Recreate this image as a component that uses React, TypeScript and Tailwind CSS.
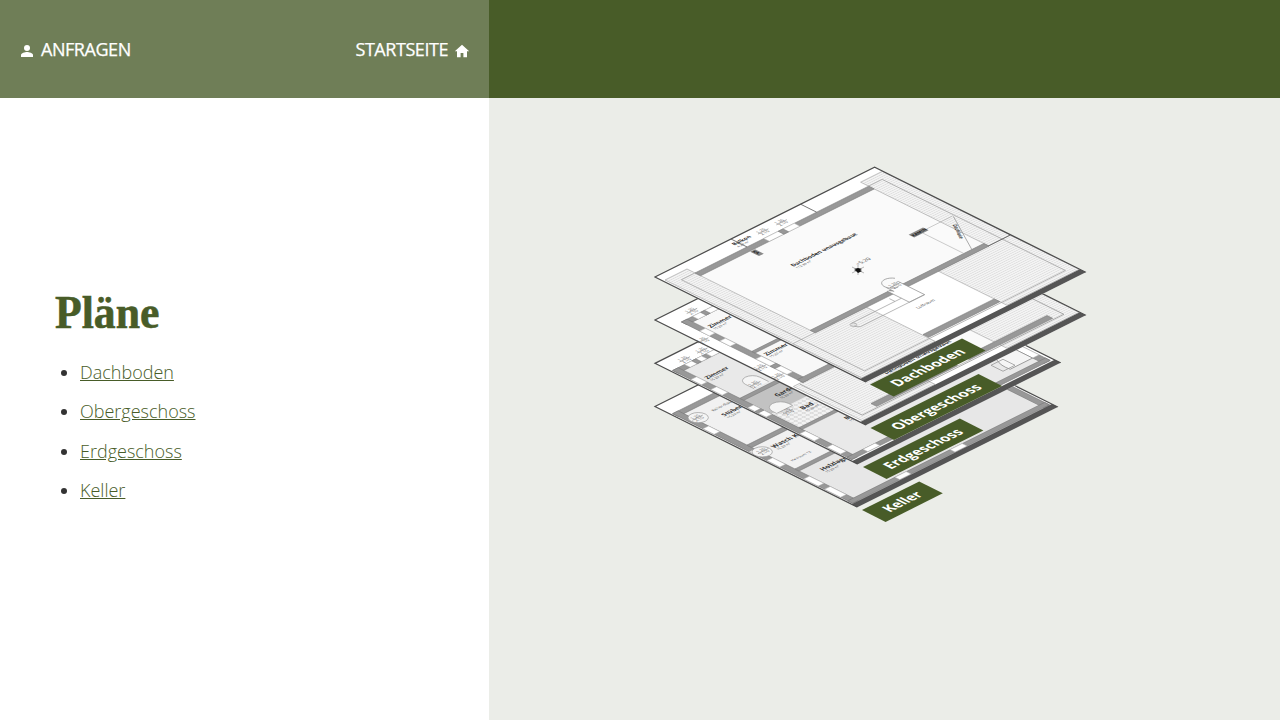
import type { ReactNode } from "react";

type Rect = [number, number, number, number];

const WALL = "#989898";
const EDGE = "#4c4c4c";

function Box({ r, fill }: { r: Rect; fill: string }) {
  return <rect x={r[0]} y={r[1]} width={r[2] - r[0]} height={r[3] - r[1]} fill={fill} />;
}

function Wall({ r }: { r: Rect }) {
  return <rect x={r[0]} y={r[1]} width={r[2] - r[0]} height={r[3] - r[1]} fill={WALL} stroke="#777" strokeWidth={0.6} />;
}

function Opening({ r }: { r: Rect }) {
  return <rect x={r[0]} y={r[1]} width={r[2] - r[0]} height={r[3] - r[1]} fill="#fff" stroke="#bbb" strokeWidth={0.5} />;
}

function Hatch({ r }: { r: Rect }) {
  return (
    <g>
      <rect x={r[0]} y={r[1]} width={r[2] - r[0]} height={r[3] - r[1]} fill="#f4f4f4" />
      <rect x={r[0]} y={r[1]} width={r[2] - r[0]} height={r[3] - r[1]} fill="url(#hatch)" stroke="#aaa" strokeWidth={0.7} />
    </g>
  );
}

function Room({ x, y, name, size = 7, note = "15.20 m²" }: { x: number; y: number; name: string; size?: number; note?: string }) {
  return (
    <g fill="#333">
      <text x={x} y={y} fontSize={size} fontWeight={700}>{name}</text>
      <text x={x} y={y + 5} fontSize={4} fill="#444">{note}</text>
    </g>
  );
}

function Dim({ x, y }: { x: number; y: number }) {
  return (
    <g fill="#666" fontSize={5}>
      <text x={x} y={y}>1.20</text>
      <text x={x} y={y + 5}>2.10</text>
      <path d={`M${x - 1} ${y + 0.7}h13`} stroke="#777" strokeWidth={0.6} />
    </g>
  );
}

function Floor({ x, y, w, h, children }: { x: number; y: number; w: number; h: number; children: ReactNode }) {
  return (
    <g transform={`matrix(.8 -.4 .8 .398 ${x} ${y})`}>
      <rect width={w} height={h} fill="#fff" />
      {children}
      <rect y={h - 7.5} width={w} height={7.5} fill="#555" />
      <path d={`M0 ${h}V0H${w}V${h}`} fill="none" stroke={EDGE} strokeWidth={1.7} />
    </g>
  );
}

function Label({ x, y, w, children }: { x: number; y: number; w: number; children: string }) {
  return (
    <g transform={`matrix(.8 -.4 .8 .405 ${x} ${y})`}>
      <rect width={w} height={29.5} fill="#485c28" />
      <text x={w / 2} y={20.3} textAnchor="middle" textLength={w - 29} lengthAdjust="spacingAndGlyphs" fontSize={16} fontWeight={700} fill="#fff">{children}</text>
    </g>
  );
}

function Plans() {
  return (
    <svg
      width="460"
      height="390"
      viewBox="640 150 460 390"
      className="ml-[151px] mt-[52px] block font-['Open_Sans',sans-serif]"
      role="img"
      aria-label="Pläne"
    >
      <defs>
        <pattern id="hatch" width="3" height="3" patternUnits="userSpaceOnUse">
          <path d="M0 1.5H3" stroke="#d8d8d8" strokeWidth=".8" />
        </pattern>
        <pattern id="tiles" width="5" height="5" patternUnits="userSpaceOnUse">
          <path d="M0 .5H5M.5 0V5" stroke="#c6c6c6" strokeWidth=".6" />
        </pattern>
      </defs>

      <Floor x={655} y={406.5} w={250.5} h={253}>
        <Box r={[2, 20, 248, 245]} fill="#e7e7e7" />
        <Box r={[9, 27, 90, 169]} fill="#f1f1f1" />
        <Wall r={[2, 20, 248, 27]} />
        <Wall r={[2, 20, 9, 245]} />
        <Wall r={[241, 20, 248, 245]} />
        <Wall r={[2, 239, 248, 245]} />
        <Wall r={[9, 106, 80, 112]} />
        <Wall r={[9, 166, 80, 171]} />
        <Opening r={[2, 58, 9, 72]} />
        <Opening r={[2, 116, 9, 128]} />
        <Opening r={[2, 138, 9, 154]} />
        <Opening r={[2, 184, 9, 202]} />
        <Opening r={[2, 210, 9, 230]} />
        <Opening r={[61, 239, 75, 245]} />
        <Opening r={[130, 239, 145, 245]} />
        <circle cx="13" cy="41" r="9" fill="#f5f5f5" stroke="#999" strokeWidth=".7" />
        <circle cx="10" cy="124" r="9" fill="#f5f5f5" stroke="#999" strokeWidth=".7" />
        <Dim x={7} y={40} />
        <Dim x={6} y={123} />
        <text x={30} y={43} fontSize={5} fill="#555">Keller-Raum</text>
        <Room x={31} y={56} name="Stüberl" />
        <Room x={22} y={127} name="Wasch Küche" size={7.5} />
        <Room x={24} y={186} name="Holzlager" size={7.5} />
        <text x={17} y={155} fontSize={4} fill="#444">Heizraum 12</text>
      </Floor>

      <Floor x={655} y={363.3} w={253.5} h={253.5}>
        <Box r={[2, 20, 250, 244]} fill="#e9e9e9" />
        <Box r={[9, 102, 70, 136]} fill="#c2c2c2" />
        <Box r={[9, 138, 70, 171]} fill="#f3f3f3" />
        <Box r={[9, 138, 70, 171]} fill="url(#tiles)" />
        <Wall r={[2, 20, 250, 27]} />
        <Wall r={[2, 20, 9, 244]} />
        <Wall r={[242, 20, 250, 244]} />
        <Wall r={[2, 238, 250, 244]} />
        <Wall r={[9, 97, 80, 102]} />
        <Wall r={[9, 171, 90, 175]} />
        <Opening r={[17, 20, 38, 27]} />
        <Wall r={[26, 20, 31, 27]} />
        <Opening r={[44, 20, 57, 27]} />
        <Opening r={[2, 43, 9, 56]} />
        <Opening r={[2, 68, 9, 82]} />
        <Opening r={[2, 114, 9, 137]} />
        <Wall r={[2, 123, 9, 127]} />
        <Opening r={[2, 179, 9, 197]} />
        <Opening r={[2, 213, 9, 230]} />
        <Opening r={[22, 238, 37, 244]} />
        <Opening r={[160, 238, 176, 244]} />
        <Opening r={[242, 198, 250, 230]} />
        <path d="M242 197H232A30 30 0 0 0 214 230H242z" fill="#f5f5f5" stroke="#888" strokeWidth=".8" />
        <path d="M207 213h15v15h-15z" fill="none" stroke="#999" strokeWidth=".8" />
        <path d="M30 94V83a9 9 0 0 1 18 0v11M13 139V134a9 9 0 0 1 20 0v5z" fill="#f5f5f5" stroke="#999" strokeWidth=".7" />
        <Dim x={31} y={88} />
        <Dim x={17} y={143} />
        <Dim x={18} y={13} />
        <Dim x={40} y={13} />
        <Room x={13} y={53} name="Zimmer" />
        <Room x={34} y={119} name="Garderobe" size={7.5} />
        <Room x={34} y={151} name="Bad" size={7.5} />
        <Room x={49} y={191} name="Büro" />
      </Floor>

      <Floor x={655} y={320} w={274.5} h={264}>
        <Box r={[21, 26, 250, 163]} fill="#f8f8f8" />
        <Box r={[94, 171, 184, 240]} fill="#fafafa" />
        <Hatch r={[3, 170, 94, 256]} />
        <Hatch r={[184, 170, 274, 256]} />
        <Wall r={[14, 19, 260, 26]} />
        <Wall r={[14, 19, 21, 171]} />
        <Wall r={[14, 164, 120, 171]} />
        <Wall r={[21, 100, 80, 104]} />
        <Wall r={[30, 240, 250, 247]} />
        <Opening r={[28, 19, 58, 26]} />
        <Wall r={[38, 19, 43, 26]} />
        <Opening r={[14, 42, 21, 54]} />
        <Opening r={[14, 67, 21, 80]} />
        <Opening r={[14, 112, 21, 151]} />
        <Wall r={[14, 130, 21, 136]} />
        <Opening r={[132, 240, 146, 247]} />
        <path d="M10 171V249H262V171M65 98V88q7-8 14 0v10" fill="none" stroke="#888" strokeWidth=".7" />
        <Dim x={29} y={11} />
        <Dim x={-1} y={55} />
        <Dim x={1} y={125} />
        <Dim x={1} y={147} />
        <Room x={25} y={45} name="Zimmer" />
        <Room x={25} y={115} name="Zimmer" />
        <Room x={76} y={213} name="Dachboden unausgebaut" size={6.6} />
      </Floor>

      <Floor x={655} y={277} w={274.5} h={264}>
        <Box r={[30, 27, 247, 163]} fill="#fafafa" />
        <Hatch r={[2.5, 10, 30, 256]} />
        <Hatch r={[247, 10, 274, 172]} />
        <Hatch r={[2.5, 170, 94, 256]} />
        <Hatch r={[184, 170, 274, 256]} />
        <Wall r={[30, 20, 247, 27]} />
        <Wall r={[30, 164, 247, 170.5]} />
        <Wall r={[95, 240, 184, 247]} />
        <path d="M30 20H13V249H264V20H247" fill="none" stroke="#999" strokeWidth=".7" />
        <Opening r={[116, 20, 154, 27]} />
        <Wall r={[134, 20, 140, 27]} />
        <path d="M95 0V20M182 0V20M247 170H274" fill="none" stroke="#555" strokeWidth=".8" />
        <Dim x={119} y={10} />
        <Dim x={142} y={10} />
        <Room x={89} y={10.5} name="Balkon" size={6.2} note="4.20 m²" />
        <Box r={[91, 28, 97, 39]} fill="#888" />
        <text transform="translate(92 29) rotate(90)" fontSize="5" fontWeight="700" fill="#222">KA.</text>
        <Room x={99} y={74} name="Dachboden unausgebaut" size={6.5} note="112.30 m²" />
        <text x={141} y={113} fontSize={6.5} fill="#444">+5.20</text>
        <Box r={[211, 106, 229, 113]} fill="#888" />
        <text x={211.5} y={111.5} fontSize={5.2} fontWeight={700} fill="#222">KAMIN</text>
        <path d="M229 110H262M222 113V164" fill="none" stroke="#aaa" strokeWidth=".6" />
        <path d="M262 111L232 164" fill="none" stroke="#888" strokeWidth=".7" />
        <text transform="translate(251 121) rotate(121)" fontSize="5.5" fontWeight="700" fill="#444">Dachluke</text>
        <path d="M127 163V191H146V158H131V168" fill="#fff" stroke="#888" strokeWidth=".7" />
        <path d="M139 165a9 9 0 1 1 9-13" fill="#fafafa" stroke="#888" strokeWidth=".7" />
        <path d="M146 191H66q-6-4-1-10H127M119 181V174" fill="none" stroke="#999" strokeWidth=".7" />
        <circle cx="64" cy="184" r="3" fill="#e4e4e4" stroke="#999" strokeWidth=".7" />
        <Dim x={134} y={160} />
        <text x={124} y={205} fontSize={5} fill="#444">Luftraum</text>
      </Floor>
      <path d="M852 267l12 6M852 273l12-6M858 265v10" stroke="#888" strokeWidth=".6" />
      <path d="M854 269l4-1 4 1-2 1 2 1-4 2-2-2-2 0 2-1z" fill="#111" />

      <Label x={862} y={510} w={71.5}>Keller</Label>
      <Label x={863} y={467} w={121}>Erdgeschoss</Label>
      <Label x={870.5} y={428} w={135}>Obergeschoss</Label>
      <Label x={870} y={384.5} w={115}>Dachboden</Label>
    </svg>
  );
}

const floors = ["Dachboden", "Obergeschoss", "Erdgeschoss", "Keller"];

export default function App() {
  return (
    <div className="flex h-screen w-full overflow-hidden bg-white font-['Open_Sans',sans-serif]">
      <aside className="flex w-[489px] shrink-0 flex-col">
        <nav className="flex h-[98px] shrink-0 items-center justify-between bg-[#6f7e57] pl-5 pr-[19px] text-[18px] leading-[27px] tracking-[-0.45px] text-white [-webkit-text-stroke:0.25px_white]">
          <a href="#anfragen" className="flex items-center gap-[7px]">
            <svg width="14" height="14" viewBox="0 0 14 14" fill="currentColor" className="mt-[3px]">
              <circle cx="7" cy="4" r="3" />
              <path d="M1 13v-2c0-2 4-3 6-3s6 1 6 3v2z" />
            </svg>
            ANFRAGEN
          </a>
          <a href="#start" className="flex items-center gap-[6px]">
            STARTSEITE
            <svg width="16" height="14" viewBox="0 0 16 14" fill="currentColor" className="mt-[3px]">
              <path d="M8 .8L.8 7.2H3V13.2h3.6V9h2.8v4.200H13V7.200h2.200z" />
            </svg>
          </a>
        </nav>
        <main className="flex flex-1 flex-col pl-[55px] pt-[185px]">
          <h1 className="h-[60px] origin-left scale-x-[0.95] font-['Liberation_Serif',serif] text-[46px] font-bold leading-[60px] text-[#485c28] [-webkit-text-stroke:0.6px_#485c28]">
            Pläne
          </h1>
          <ul className="mt-4 flex list-disc flex-col gap-[12.400px] pl-[25px] text-[18px] font-light leading-[27px] text-[#333]">
            {floors.map((name) => (
              <li key={name}>
                <a href={"#" + name} className="text-[#485c28] underline">{name}</a>
              </li>
            ))}
          </ul>
        </main>
      </aside>
      <section className="flex flex-1 flex-col bg-[#ebede8]">
        <div className="h-[98px] shrink-0 bg-[#485c28]" />
        <Plans />
      </section>
    </div>
  );
}
